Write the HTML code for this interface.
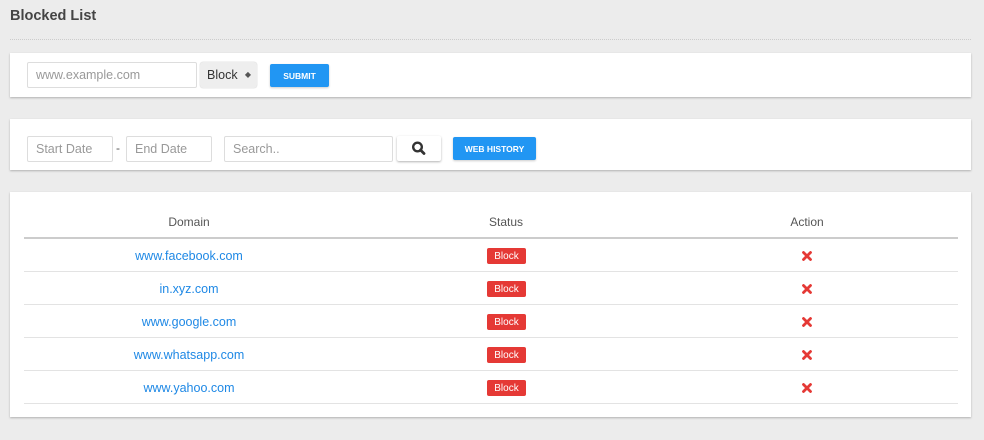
<!DOCTYPE html>
<html><head><style>
*{box-sizing:border-box;margin:0;padding:0}
body{width:984px;height:440px;background:#ececec;font-family:"Liberation Sans",sans-serif;position:relative;overflow:hidden}
.abs{position:absolute}
.card{position:absolute;left:10px;width:961px;background:#fff;box-shadow:0 1px 2px rgba(0,0,0,.25)}
.inp{position:absolute;border:1px solid #ddd;border-radius:2px;background:#fff;color:#999;font-size:12.5px;padding-left:8px;display:flex;align-items:center}
.btn{position:absolute;background:#2196f3;color:#fff;font-size:8.5px;font-weight:bold;display:flex;align-items:center;justify-content:center;border-radius:2px;box-shadow:0 1px 2px rgba(0,0,0,.2)}
.th{position:absolute;top:215px;font-size:12px;color:#555;transform:translateX(-50%)}
.dom{position:absolute;color:#1e88e5;font-size:12.5px;transform:translateX(-50%)}
.badge{position:absolute;left:487px;width:39px;height:16px;background:#e53935;color:#fff;font-size:10px;display:flex;align-items:center;justify-content:center;border-radius:2px}
.x{position:absolute;left:801px;width:12px;height:12px}
.hr{position:absolute;left:24px;width:934px;height:1px;background:#e3e3e3}
</style></head><body>
<div class="abs" style="left:10px;top:8px;font-size:14.5px;font-weight:bold;color:#444">Blocked List</div>
<div class="abs" style="left:10px;top:39px;width:961px;border-top:1px dotted #ccc"></div>

<div class="card" style="top:53px;height:44px"></div>
<div class="inp" style="left:27px;top:62px;width:170px;height:26px">www.example.com</div>
<div class="abs" style="left:200px;top:62px;width:57px;height:26px;background:#eee;border-radius:3px;font-size:12.5px;color:#333;padding-left:7px;line-height:26px;box-shadow:0 0 1px rgba(0,0,0,.3)">Block<span style="position:absolute;right:6px;top:0;font-size:8px;color:#555">&#9670;</span></div>
<div class="btn" style="left:270px;top:64px;width:59px;height:23px">SUBMIT</div>

<div class="card" style="top:119px;height:51px"></div>
<div class="inp" style="left:27px;top:136px;width:86px;height:26px">Start Date</div>
<div class="abs" style="left:116px;top:141px;font-size:12px;color:#555">-</div>
<div class="inp" style="left:126px;top:136px;width:86px;height:26px">End Date</div>
<div class="inp" style="left:224px;top:136px;width:169px;height:26px">Search..</div>
<div class="abs" style="left:397px;top:136px;width:44px;height:25px;background:#fff;border-radius:2px;box-shadow:0 1px 2px rgba(0,0,0,.3)"><svg width="44" height="25"><circle cx="20.5" cy="11" r="4.3" fill="none" stroke="#333" stroke-width="2.4"/><path d="M23.5 14l3.5 3.5" stroke="#333" stroke-width="2.8" stroke-linecap="round"/></svg></div>
<div class="btn" style="left:453px;top:137px;width:83px;height:23px">WEB HISTORY</div>

<div class="card" style="top:192px;height:225px"></div>
<div class="th" style="left:189px">Domain</div>
<div class="th" style="left:506px">Status</div>
<div class="th" style="left:807px">Action</div>
<div class="abs" style="left:24px;top:237px;width:934px;height:2px;background:#ccc"></div>

<div class="dom" style="left:189px;top:249px">www.facebook.com</div>
<div class="dom" style="left:189px;top:282px">in.xyz.com</div>
<div class="dom" style="left:189px;top:315px">www.google.com</div>
<div class="dom" style="left:189px;top:348px">www.whatsapp.com</div>
<div class="dom" style="left:189px;top:381px">www.yahoo.com</div>

<div class="badge" style="top:248px">Block</div>
<div class="badge" style="top:281px">Block</div>
<div class="badge" style="top:314px">Block</div>
<div class="badge" style="top:347px">Block</div>
<div class="badge" style="top:380px">Block</div>

<svg class="x" style="top:250px" viewBox="0 0 12 12"><path d="M2.5 2.5l7 7M9.5 2.5l-7 7" stroke="#e53935" stroke-width="2.8" stroke-linecap="round"/></svg>
<svg class="x" style="top:283px" viewBox="0 0 12 12"><path d="M2.5 2.5l7 7M9.5 2.5l-7 7" stroke="#e53935" stroke-width="2.8" stroke-linecap="round"/></svg>
<svg class="x" style="top:316px" viewBox="0 0 12 12"><path d="M2.5 2.5l7 7M9.5 2.5l-7 7" stroke="#e53935" stroke-width="2.8" stroke-linecap="round"/></svg>
<svg class="x" style="top:349px" viewBox="0 0 12 12"><path d="M2.5 2.5l7 7M9.5 2.5l-7 7" stroke="#e53935" stroke-width="2.8" stroke-linecap="round"/></svg>
<svg class="x" style="top:382px" viewBox="0 0 12 12"><path d="M2.5 2.5l7 7M9.5 2.5l-7 7" stroke="#e53935" stroke-width="2.8" stroke-linecap="round"/></svg>

<div class="hr" style="top:271px"></div>
<div class="hr" style="top:304px"></div>
<div class="hr" style="top:337px"></div>
<div class="hr" style="top:370px"></div>
<div class="hr" style="top:403px"></div>
</body></html>
